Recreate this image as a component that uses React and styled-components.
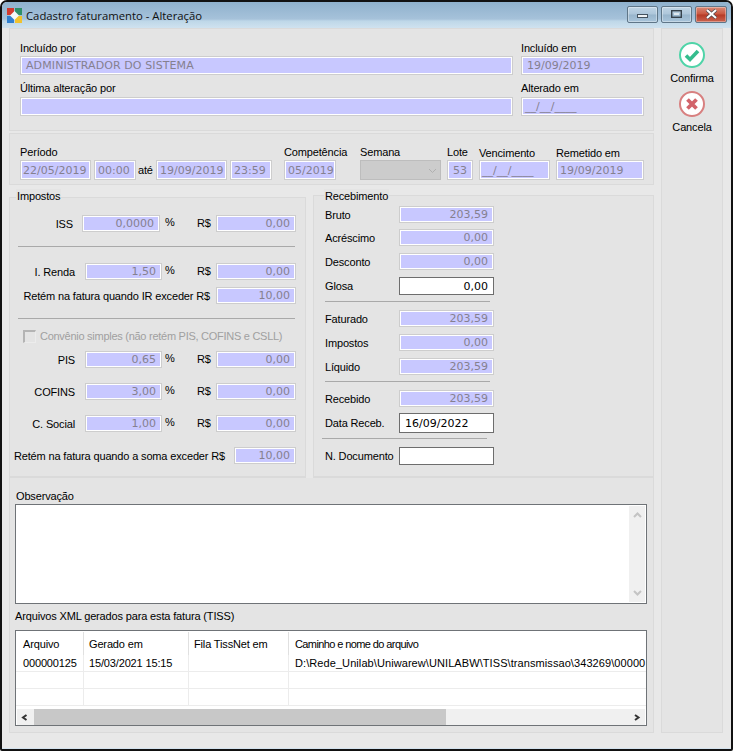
import React from 'react'
import styled, { createGlobalStyle, css } from 'styled-components'

const Global = createGlobalStyle`
  html, body {
    margin: 0;
    padding: 0;
    background: #fff;
  }
`

const uiFont = `"Liberation Sans", Arial, sans-serif`
const fieldFont = `"DejaVu Sans", Verdana, sans-serif`

const Window = styled.div`
  width: 733px;
  height: 751px;
  box-sizing: border-box;
  border: 2px solid #111;
  border-radius: 7px 7px 2px 2px;
  background: #e8e8e8;
  box-shadow: inset 0 -1px 0 #d3e2ee;
  overflow: hidden;
  font-family: ${uiFont};
  font-size: 11px;
  letter-spacing: -0.15px;
  color: #000;
`

const TitleBar = styled.div`
  height: 26px;
  display: flex;
  align-items: center;
  padding: 0 4px 0 5px;
  background: linear-gradient(#8fb1cd 0, #a6c2da 17px, #bed7e8 19px, #cfe2ef 26px);
`

const Title = styled.span`
  margin-left: 4px;
  flex: 1;
  font-family: "Open Sans", sans-serif;
  font-size: 11.3px;
  letter-spacing: 0;
  color: #101010;
`

const CaptionButton = styled.div`
  width: ${p => p.w}px;
  height: 17px;
  margin-left: 3px;
  margin-top: -2px;
  box-sizing: border-box;
  border: 1px solid #5f7688;
  border-radius: 2px;
  display: flex;
  align-items: center;
  justify-content: center;
  background: ${p => p.close
    ? 'linear-gradient(#d98a78 0, #c9563f 48%, #b53a26 52%, #c9634f 100%)'
    : 'linear-gradient(#c0d4e4 0, #adc6da 48%, #98b5cc 52%, #a8c4da 100%)'};
  box-shadow: inset 0 0 0 1px rgba(255, 255, 255, 0.35);
`

const MinGlyph = styled.svg`
  margin-top: 4px;
`

const Body = styled.div`
  display: flex;
  gap: 7px;
  padding: 0 6px 13px 7px;
`

const Main = styled.div`
  width: 645px;
  display: flex;
  flex-direction: column;
`

const Panel = styled.div`
  box-sizing: border-box;
  background: #e4e4e4;
  border: 1px solid #dadada;
  height: ${p => p.h}px;
`

const TopPanel = styled(Panel)`
  display: grid;
  grid-template-columns: 493px 123px;
  column-gap: 8px;
  padding: 12px 0 0 10px;
  align-content: start;
`

const Cell = styled.div`
  display: flex;
  flex-direction: column;
  height: 41px;
`

const Label = styled.label`
  display: block;
  height: 15px;
  line-height: 15px;
  white-space: nowrap;
  margin-top: ${p => p.top || 0}px;
  margin-bottom: ${p => p.bottom || 0}px;
  transform: translateY(${p => p.drop || 0}px);
`

const fieldBase = css`
  box-sizing: border-box;
  flex: none;
  border: 1px solid #cdcdcd;
  font-family: ${fieldFont};
  font-size: 11px;
  letter-spacing: 0;
  line-height: 1;
  display: flex;
  align-items: center;
  overflow: hidden;
  white-space: nowrap;
`

const Field = styled.div`
  ${fieldBase};
  width: ${p => (p.w ? p.w + 'px' : '100%')};
  height: ${p => p.h || 17}px;
  background: #c8c8ff;
  box-shadow: inset 0 0 0 1px #fff;
  color: #85808f;
  padding: 0 ${p => p.pad ?? 5}px;
  justify-content: ${p => (p.right ? 'flex-end' : 'flex-start')};
`

const NameField = styled(Field)`
  letter-spacing: 0.1px;
`

const Editable = styled.div`
  ${fieldBase};
  width: 95px;
  height: ${p => p.h || 18}px;
  background: #fff;
  border-color: #6d6d6d;
  color: #000;
  padding: 0 5px;
  justify-content: ${p => (p.right ? 'flex-end' : 'flex-start')};
`

const PeriodPanel = styled(Panel)`
  display: flex;
  margin-top: 2px;
  padding: 11px 0 0 10px;
`

const PeriodCol = styled.div`
  display: flex;
  flex-direction: column;
  flex: none;
  width: ${p => (p.w ? p.w + 'px' : 'auto')};
  margin-right: ${p => p.mr || 0}px;
`

const PeriodRow = styled.div`
  display: flex;
  gap: 3px;
  align-items: center;
`

const Ate = styled.span`
  width: 14px;
  text-align: center;
  margin: 0 1px 0 -1px;
`

const Select = styled.div`
  box-sizing: border-box;
  width: 81px;
  height: 20px;
  background: #cccccc;
  border: 1px solid #bdbdbd;
  display: flex;
  align-items: center;
  justify-content: flex-end;
  padding-right: 3px;
`

const Columns = styled.div`
  display: flex;
  align-items: flex-end;
  height: 283px;
  margin-top: 10px;
  gap: 7px;
`

const Group = styled.div`
  position: relative;
  box-sizing: border-box;
  width: ${p => (p.w ? p.w + 'px' : 'auto')};
  height: ${p => p.h}px;
  flex: ${p => (p.w ? 'none' : 1)};
  border: 1px solid #dadada;
  border-bottom-width: 2px;
  background: #e4e4e4;
`

const Legend = styled.span`
  position: absolute;
  top: ${p => p.top}px;
  left: ${p => p.left}px;
  padding: 0 1px;
  background: #e4e4e4;
  line-height: 15px;
`

const TaxContent = styled.div`
  display: flex;
  flex-direction: column;
  padding-top: 17px;
`

const TaxRow = styled.div`
  display: flex;
  align-items: center;
  width: 286px;
  height: 17px;
  margin-top: ${p => p.top || 0}px;
`

const RowLabel = styled.span`
  width: ${p => p.w}px;
  flex: none;
  text-align: right;
  white-space: nowrap;
  margin-right: ${p => p.mr}px;
`

const Percent = styled.span`
  margin-left: ${p => p.left}px;
  margin-top: -3px;
`

const Currency = styled.span`
  width: 19px;
  margin-left: auto;
  margin-top: -2px;
`

const Rule = styled.div`
  height: 1px;
  background: #a9a9a9;
  width: ${p => p.w}px;
  margin-left: ${p => p.left}px;
  margin-top: ${p => p.top}px;
`

const CheckRow = styled.div`
  display: flex;
  align-items: center;
  height: 14px;
  margin: 10px 0 0 13px;
  color: #a0a0a0;
  letter-spacing: -0.27px;
  white-space: nowrap;
  gap: 4px;
`

const CheckBox = styled.span`
  width: 13px;
  height: 13px;
  box-sizing: border-box;
  border-top: 2px solid #b4b4b4;
  border-left: 2px solid #b4b4b4;
  border-right: 1px solid #ececec;
  border-bottom: 1px solid #ececec;
`

const ReceiptContent = styled.div`
  display: flex;
  flex-direction: column;
  padding: 10px 0 0 11px;
`

const ReceiptRow = styled.div`
  display: flex;
  align-items: center;
  margin-top: ${p => p.top || 0}px;
`

const ReceiptLabel = styled.span`
  width: 74px;
  flex: none;
  white-space: nowrap;
`

const BottomPanel = styled(Panel)`
  border-top: none;
  padding: 11px 6px 0 5px;
`

const Caption = styled.div`
  line-height: 15px;
  margin-top: ${p => p.top || 0}px;
  padding-left: ${p => p.inset || 0}px;
`

const Memo = styled.div`
  box-sizing: border-box;
  height: 100px;
  background: #fff;
  border: 1px solid #6f7377;
  display: flex;
  justify-content: flex-end;
  padding: 1px;
`

const VScroll = styled.div`
  width: 16px;
  background: #f0f0f0;
  display: flex;
  flex-direction: column;
  justify-content: space-between;
  align-items: center;
  padding: 6px 0;
`

const GridBox = styled.div`
  box-sizing: border-box;
  height: 96px;
  margin-top: 6px;
  background: #fff;
  border: 1px solid #6f7377;
  display: flex;
  flex-direction: column;
  overflow: hidden;
`

const GridRow = styled.div`
  display: grid;
  grid-template-columns: 68px 105px 100px 1fr;
  height: ${p => p.h}px;
  flex: none;
  box-sizing: border-box;
  border-bottom: ${p => (p.head ? 'none' : '1px solid #ececec')};
`

const GridCell = styled.div`
  box-sizing: border-box;
  padding: ${p => (p.head ? '5px' : '1px')} 0 0 ${p => p.pad}px;
  border-right: 1px solid ${p => (p.head ? '#e0e0e0' : '#ececec')};
  letter-spacing: ${p => p.spacing ?? -0.15}px;
  line-height: 15px;
  white-space: nowrap;
  overflow: hidden;
  margin-top: ${p => (p.head ? 1 : 0)}px;
  &:last-child {
    border-right: none;
  }
`

const HScroll = styled.div`
  height: 16px;
  margin: 3px 1px 0;
  background: #f0f0f0;
  display: flex;
  align-items: center;
`

const Thumb = styled.div`
  width: 412px;
  height: 100%;
  background: #c8c8c8;
`

const ScrollEnd = styled.div`
  width: 17px;
  display: flex;
  justify-content: center;
  margin-left: ${p => (p.push ? 'auto' : 0)};
`

const Side = styled.div`
  box-sizing: border-box;
  width: 62px;
  border: 1px solid #dadada;
  background: #e4e4e4;
  height: 705px;
  display: flex;
  flex-direction: column;
  align-items: center;
  padding-top: 12px;
`

const SideButton = styled.div`
  display: flex;
  flex-direction: column;
  align-items: center;
  gap: 2px;
  width: 100%;
  height: 49px;
  line-height: 15px;
`

const AppIcon = () => (
  <svg width="15" height="15" viewBox="0 0 15 15">
    <rect x="0" y="0" width="7" height="7" fill="#d23b30" />
    <rect x="8" y="0" width="7" height="7" fill="#2f8f6a" />
    <rect x="0" y="8" width="7" height="7" fill="#2f7fd0" />
    <rect x="8" y="8" width="7" height="7" fill="#f0c22e" />
    <path d="M7.5 3L12 7.5 7.5 12 3 7.5z" fill="#f4f7f9" />
  </svg>
)

const Chevron = ({ d, c = '#c4c4c4', w = 2 }) => (
  <svg width="9" height="7" viewBox="0 0 9 7">
    <path d={d} fill="none" stroke={c} strokeWidth={w} />
  </svg>
)

const ConfirmIcon = () => (
  <svg width="28" height="28" viewBox="0 0 28 28">
    <circle cx="14" cy="14" r="12" fill="#fff" stroke="#4fd4a8" strokeWidth="2" />
    <path d="M8 14.5l4 4 8-8.5" fill="none" stroke="#35bd8e" strokeWidth="3.6" />
  </svg>
)

const CancelIcon = () => (
  <svg width="28" height="28" viewBox="0 0 28 28">
    <circle cx="14" cy="14" r="12" fill="#fff" stroke="#d88080" strokeWidth="2" />
    <path d="M9.5 9.5l9 9M18.5 9.5l-9 9" fill="none" stroke="#d2636a" strokeWidth="3.8" />
  </svg>
)

const TaxLine = ({ label, labelW = 65, mr = 10, pct, pctW = 77, pctLeft = 3, amount, top }) => (
  <TaxRow top={top}>
    <RowLabel w={labelW} mr={mr}>{label}</RowLabel>
    <Field w={pctW} right>{pct}</Field>
    <Percent left={pctLeft}>%</Percent>
    <Currency>R$</Currency>
    <Field w={80} right>{amount}</Field>
  </TaxRow>
)

const Receipt = ({ label, value, top }) => (
  <ReceiptRow top={top}>
    <ReceiptLabel>{label}</ReceiptLabel>
    <Field w={95} right>{value}</Field>
  </ReceiptRow>
)

export default function App() {
  return (
    <>
      <Global />
      <Window>
        <TitleBar>
          <AppIcon />
          <Title>Cadastro faturamento - Alteração</Title>
          <CaptionButton w={31}>
            <MinGlyph width="11" height="4"><rect x="0.5" y="0.5" width="10" height="3" fill="#eef2f5" stroke="#44525e" /></MinGlyph>
          </CaptionButton>
          <CaptionButton w={31}>
            <svg width="11" height="8"><rect x="0.7" y="0.7" width="9.6" height="6.6" fill="none" stroke="#36424c" strokeWidth="1.4" /><rect x="3" y="3" width="5" height="2" fill="#dfe8ef" /></svg>
          </CaptionButton>
          <CaptionButton w={32} close>
            <svg width="13" height="10" viewBox="0 0 13 10"><path d="M2 1l9 8M11 1l-9 8" stroke="#4d4d55" strokeWidth="3.4" /><path d="M2 1l9 8M11 1l-9 8" stroke="#fff" strokeWidth="2" /></svg>
          </CaptionButton>
        </TitleBar>
        <Body>
          <Main>
            <TopPanel h={103}>
              <Cell>
                <Label>Incluído por</Label>
                <NameField h={19}>ADMINISTRADOR DO SISTEMA</NameField>
              </Cell>
              <Cell>
                <Label>Incluído em</Label>
                <Field h={19}>19/09/2019</Field>
              </Cell>
              <Cell>
                <Label top={-1} bottom={1}>Última alteração por</Label>
                <Field h={19} />
              </Cell>
              <Cell>
                <Label top={-1} bottom={1}>Alterado em</Label>
                <Field h={19} pad={3}>__/__/____</Field>
              </Cell>
            </TopPanel>
            <PeriodPanel h={52}>
              <PeriodCol mr={12}>
                <Label>Período</Label>
                <PeriodRow>
                  <Field w={71} h={20} pad={2}>22/05/2019</Field>
                  <Field w={42} h={20} pad={3}>00:00</Field>
                  <Ate>até</Ate>
                  <Field w={71} h={20} pad={3}>19/09/2019</Field>
                  <Field w={42} h={20} pad={3}>23:59</Field>
                </PeriodRow>
              </PeriodCol>
              <PeriodCol w={52} mr={24}>
                <Label>Competência</Label>
                <Field w={52} h={20} pad={3}>05/2019</Field>
              </PeriodCol>
              <PeriodCol w={81} mr={6}>
                <Label>Semana</Label>
                <Select><Chevron d="M1 2l3.5 3.5L8 2" c="#b0b0b0" w={1} /></Select>
              </PeriodCol>
              <PeriodCol w={26} mr={6}>
                <Label>Lote</Label>
                <Field w={26} h={20} pad={5}>53</Field>
              </PeriodCol>
              <PeriodCol w={71} mr={6}>
                <Label drop={1}>Vencimento</Label>
                <Field w={71} h={20} pad={2}>__/__/____</Field>
              </PeriodCol>
              <PeriodCol w={88}>
                <Label drop={1}>Remetido em</Label>
                <Field w={88} h={20} pad={3}>19/09/2019</Field>
              </PeriodCol>
            </PeriodPanel>
            <Columns>
              <Group w={297} h={281}>
                <Legend top={-9} left={6}>Impostos</Legend>
                <TaxContent>
                  <TaxLine label="ISS" labelW={63} mr={9} pct="0,0000" pctW={78} pctLeft={5} amount="0,00" />
                  <Rule left={8} w={277} top={14} />
                  <TaxLine label="I. Renda" pct="1,50" amount="0,00" top={16} />
                  <TaxRow top={7}>
                    <RowLabel w={200} mr={6}>Retém na fatura quando IR exceder R$</RowLabel>
                    <Field w={80} right>10,00</Field>
                  </TaxRow>
                  <Rule left={8} w={277} top={14} />
                  <CheckRow>
                    <CheckBox />
                    Convênio simples (não retém PIS, COFINS e CSLL)
                  </CheckRow>
                  <TaxLine label="PIS" pct="0,65" amount="0,00" top={8} />
                  <TaxLine label="COFINS" pct="3,00" amount="0,00" top={15} />
                  <TaxLine label="C. Social" pct="1,00" amount="0,00" top={15} />
                  <TaxRow top={15}>
                    <RowLabel w={215} mr={9}>Retém na fatura quando a soma exceder R$</RowLabel>
                    <Field w={62} right>10,00</Field>
                  </TaxRow>
                </TaxContent>
              </Group>
              <Group h={283}>
                <Legend top={-7} left={10}>Recebimento</Legend>
                <ReceiptContent>
                  <Receipt label="Bruto" value="203,59" />
                  <Receipt label="Acréscimo" value="0,00" top={6} />
                  <Receipt label="Desconto" value="0,00" top={7} />
                  <ReceiptRow top={7}>
                    <ReceiptLabel>Glosa</ReceiptLabel>
                    <Editable right>0,00</Editable>
                  </ReceiptRow>
                  <Rule left={0} w={165} top={6} />
                  <Receipt label="Faturado" value="203,59" top={8} />
                  <Receipt label="Impostos" value="0,00" top={7} />
                  <Receipt label="Líquido" value="203,59" top={7} />
                  <Rule left={0} w={165} top={6} />
                  <Receipt label="Recebido" value="203,59" top={8} />
                  <ReceiptRow top={6}>
                    <ReceiptLabel>Data Receb.</ReceiptLabel>
                    <Editable h={20}>16/09/2022</Editable>
                  </ReceiptRow>
                  <Rule left={-3} w={165} top={5} />
                  <ReceiptRow top={8}>
                    <ReceiptLabel>N. Documento</ReceiptLabel>
                    <Editable />
                  </ReceiptRow>
                </ReceiptContent>
              </Group>
            </Columns>
            <BottomPanel h={255}>
              <Caption inset={1}>Observação</Caption>
              <Memo>
                <VScroll>
                  <Chevron d="M1 5l3.5-3.5L8 5" />
                  <Chevron d="M1 2l3.5 3.5L8 2" />
                </VScroll>
              </Memo>
              <Caption top={5}>Arquivos XML gerados para esta fatura (TISS)</Caption>
              <GridBox>
                <GridRow h={24} head>
                  <GridCell head pad={7}>Arquivo</GridCell>
                  <GridCell head pad={5}>Gerado em</GridCell>
                  <GridCell head pad={5}>Fila TissNet em</GridCell>
                  <GridCell head pad={6} spacing={-0.6}>Caminho e nome do arquivo</GridCell>
                </GridRow>
                <GridRow h={17}>
                  <GridCell pad={7}>000000125</GridCell>
                  <GridCell pad={5}>15/03/2021 15:15</GridCell>
                  <GridCell pad={5} />
                  <GridCell pad={6} spacing={0.08}>D:\Rede_Unilab\Uniwarew\UNILABW\TISS\transmissao\343269\00000</GridCell>
                </GridRow>
                <GridRow h={17}><GridCell /><GridCell /><GridCell /><GridCell /></GridRow>
                <GridRow h={17}><GridCell /><GridCell /><GridCell /><GridCell /></GridRow>
                <HScroll>
                  <ScrollEnd><Chevron d="M5.5 1L2 3.5 5.5 6" c="#333" /></ScrollEnd>
                  <Thumb />
                  <ScrollEnd push><Chevron d="M3 1l3.5 2.5L3 6" c="#333" /></ScrollEnd>
                </HScroll>
              </GridBox>
            </BottomPanel>
          </Main>
          <Side>
            <SideButton><ConfirmIcon />Confirma</SideButton>
            <SideButton><CancelIcon />Cancela</SideButton>
          </Side>
        </Body>
      </Window>
    </>
  )
}
